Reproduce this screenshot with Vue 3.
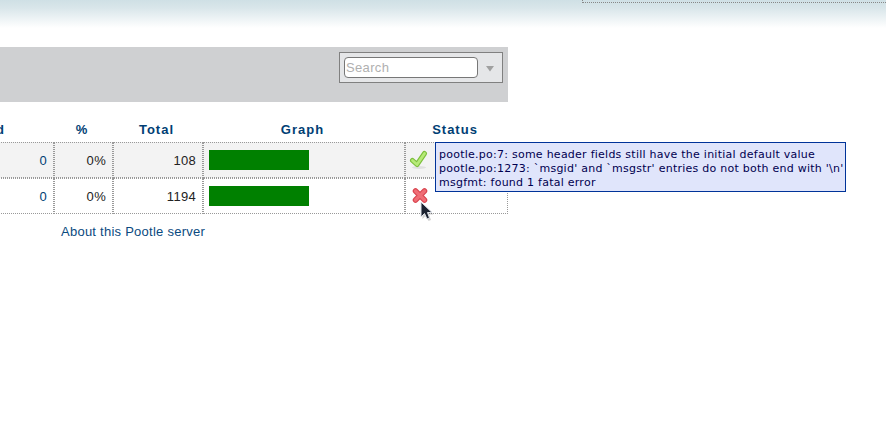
<script setup>
const rows = [
  { untranslated: 0, pct: '0%', total: 108, alt: true, ok: true },
  { untranslated: 0, pct: '0%', total: 1194, alt: false, ok: false },
]
</script>

<template>
  <div class="page">
    <header class="top">
      <div class="corner"></div>
    </header>
    <main class="main">
      <div class="bar">
        <div class="search">
          <input class="field" placeholder="Search" />
          <svg class="arrow" width="8" height="6" viewBox="0 0 8 6">
            <path d="M0 0H8L4 5.5Z" fill="#a0a0a0" />
          </svg>
        </div>
      </div>
      <table class="stats">
        <thead>
          <tr>
            <th class="c1">Untranslated</th>
            <th class="c2">%</th>
            <th class="c3">Total</th>
            <th class="c4">Graph</th>
            <th class="c5">Status</th>
          </tr>
        </thead>
        <tbody>
          <tr v-for="(row, i) in rows" :key="i" :class="{ alt: row.alt }">
            <td class="num link">{{ row.untranslated }}</td>
            <td class="num">{{ row.pct }}</td>
            <td class="num">{{ row.total }}</td>
            <td class="graph"><div class="fill"></div></td>
            <td class="status">
              <svg v-if="row.ok" width="20" height="20" viewBox="0 0 20 20">
                <ellipse cx="10" cy="17.5" rx="7" ry="1.5" fill="#000" opacity="0.08" />
                <path d="M3.5 10.5L8 14.5L15.5 3.5" fill="none" stroke="#7cbf3c" stroke-width="5" stroke-linecap="round" stroke-linejoin="round" />
                <path d="M3.5 10.5L8 14.5L15.5 3.5" fill="none" stroke="#b6ea78" stroke-width="2.8" stroke-linecap="round" stroke-linejoin="round" />
              </svg>
              <svg v-else width="20" height="20" viewBox="0 0 20 20">
                <path d="M6.5 5L15.5 14M15.5 5L6.5 14" fill="none" stroke="#d9444f" stroke-width="5.5" stroke-linecap="round" />
                <path d="M6.5 5L15.5 14M15.5 5L6.5 14" fill="none" stroke="#ef6d75" stroke-width="3.2" stroke-linecap="round" />
              </svg>
            </td>
          </tr>
        </tbody>
      </table>
      <footer class="foot">
        <a class="about">About this Pootle server</a>
      </footer>
      <div class="tip">
        <div>pootle.po:7: some header fields still have the initial default value</div>
        <div>pootle.po:1273: `msgid' and `msgstr' entries do not both end with '\n'</div>
        <div>msgfmt: found 1 fatal error</div>
      </div>
      <svg class="cursor" width="14" height="20" viewBox="0 0 14 20">
        <path d="M2.5 3V18L6 14.5L8.5 20L11 19L9 13.5H13.5Z" fill="#000" opacity="0.18" />
        <path d="M1 1V16L4.5 12.5L7 18L9.5 17L7.5 11.5H12Z" fill="#1a2230" stroke="#dfe3ea" stroke-width="1" />
      </svg>
    </main>
  </div>
</template>

<style>
html, body { margin: 0; background: #fff; overflow: hidden; }
</style>

<style scoped>
.page {
  width: 886px;
  height: 428px;
  overflow: hidden;
  position: relative;
  font-family: "Liberation Sans", Arial, sans-serif;
  font-size: 13px;
  color: #222;
}
.top {
  height: 47px;
  background: linear-gradient(#cfe0e5 0, #d9e6ea 8px, #ffffff 28px);
  display: flex;
  justify-content: flex-end;
}
.corner {
  width: 303px;
  height: 2px;
  border-left: 1px dotted #888;
  border-bottom: 1px dotted #888;
}
.main {
  width: 708px;
  margin-left: -200px;
  position: relative;
}
.bar {
  height: 55px;
  background: #cfd0d2;
  display: flex;
  justify-content: flex-end;
  padding: 5px 5px 0 0;
  box-sizing: border-box;
}
.search {
  width: 164px;
  height: 31px;
  box-sizing: border-box;
  border: 1px solid #808080;
  background: #e5e6e8;
  display: flex;
  align-items: center;
  gap: 8px;
  padding-left: 4px;
}
.field {
  width: 134px;
  height: 21px;
  box-sizing: border-box;
  border: 1px solid #777;
  border-radius: 4px;
  background: #fff;
  padding: 0 1px;
  font: 13px "Liberation Sans", Arial, sans-serif;
  letter-spacing: 0.35px;
  outline: none;
}
.field::placeholder { color: #b0b0b0; opacity: 1; }
.arrow { margin-top: 3px; }
.stats {
  width: 708px;
  margin-top: 19px;
  border-collapse: separate;
  border-spacing: 0;
  table-layout: fixed;
}
th {
  height: 21px;
  padding: 0 3px 5px 0;
  box-sizing: border-box;
  color: #003e74;
  font-size: 13px;
  font-weight: bold;
  letter-spacing: 1px;
  text-align: center;
}
th.c1 { width: 254px; text-align: right; padding-right: 49px; }
.c2 { width: 59px; }
.c3 { width: 90px; }
.c4 { width: 202px; }
.c5 { width: 103px; }
td {
  height: 36px;
  padding: 0 6px 0 0;
  box-sizing: border-box;
  border: 1px dotted #999;
  letter-spacing: 0.3px;
}
.alt td { background: #f3f3f3; }
.num { text-align: right; }
.link { color: #003e74; }
td.graph { padding: 0 5px; }
.fill { width: 100px; height: 20px; background: #008000; }
td.status { padding: 0 0 0 3px; }
.status svg { display: block; }
.foot {
  margin-top: 10px;
  padding-left: 261px;
}
.about { color: #0a4a80; letter-spacing: 0.25px; }
.tip {
  position: absolute;
  left: 635px;
  top: 95px;
  width: 411px;
  height: 50px;
  box-sizing: border-box;
  padding: 5px 0 0 3px;
  background: #e0e5fb;
  border: 1px solid #003399;
  font: 11px/14px "DejaVu Sans", Verdana, sans-serif;
  letter-spacing: 0.25px;
  color: #000050;
  white-space: nowrap;
}
.cursor {
  position: absolute;
  left: 620px;
  top: 154px;
}
</style>
